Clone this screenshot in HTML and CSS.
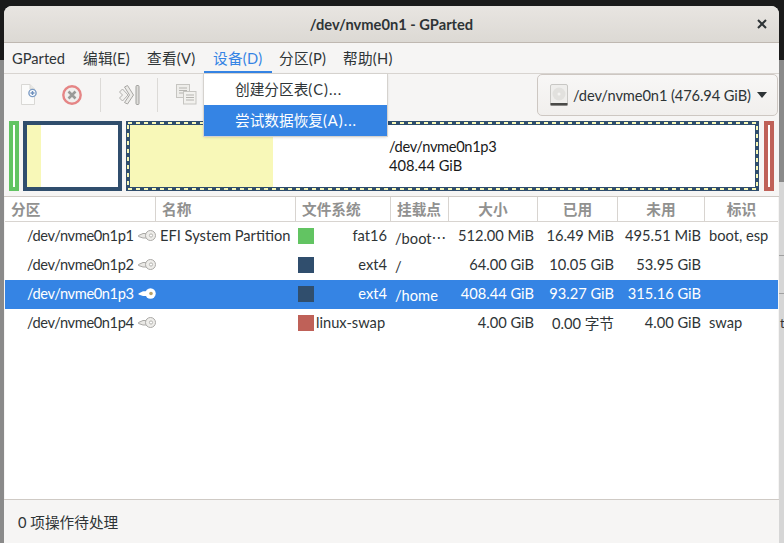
FILE: index.html
```html
<!DOCTYPE html>
<html lang="zh-CN">
<head>
<meta charset="utf-8">
<title>/dev/nvme0n1 - GParted</title>
<link rel="stylesheet" href="styles.css">
</head>
<body>
<div class="desk-left"></div>
<div class="desk-right"><span class="desk-line l1"></span><span class="desk-line l2"></span><span class="desk-text">te</span></div>
<main class="window">
  <header class="titlebar">
    <span class="title">/dev/nvme0n1 - GParted</span>
    <svg class="close" width="10" height="10" viewBox="0 0 10 10"><path d="M1 1L9 9M9 1L1 9" stroke="#2e3436" stroke-width="2" fill="none"/></svg>
  </header>
  <nav class="menubar">
    <span class="menu m1">GParted</span>
    <span class="menu m2">编辑(E)</span>
    <span class="menu m3">查看(V)</span>
    <span class="menu m4 active">设备(D)</span>
    <span class="menu m5">分区(P)</span>
    <span class="menu m6">帮助(H)</span>
  </nav>
  <div class="toolbar">
    <svg class="tool t-new" width="18" height="23" viewBox="0 0 18 23">
      <path d="M1.5 1.5H10L14.5 6V21.5H1.5Z" fill="#fbfbfa" stroke="#d9d8d5"/>
      <path d="M10 1.5V6H14.5" fill="#e8e7e4" stroke="#d9d8d5"/>
      <circle cx="12.5" cy="10" r="3.6" fill="#fff" stroke="#7d9cc4" stroke-width="1.4"/>
      <path d="M10.5 10H14.5M12.5 8V12" stroke="#6e90bd" stroke-width="1.4"/>
    </svg>
    <svg class="tool t-del" width="22" height="22" viewBox="0 0 22 22">
      <circle cx="11" cy="11" r="8.7" fill="#f1efed" stroke="#e58585" stroke-width="2.4"/>
      <path d="M7.5 7.5L14.5 14.5M14.5 7.5L7.5 14.5" stroke="#9a9a98" stroke-width="2.6"/>
    </svg>
    <span class="tsep s1"></span>
    <svg class="tool t-res" width="22" height="22" viewBox="0 0 22 22">
      <path d="M1.5 8L4.5 5L10 11L4.5 17L1.5 14L4.5 11Z" fill="#f2f1ef" stroke="#b0afac"/>
      <path d="M6.5 3L9.5 1.5L15.5 11L9.5 20L6.5 18.5L11.5 11Z" fill="#ecebe8" stroke="#a8a7a4"/>
      <rect x="18" y="1.5" width="3" height="19" rx="1" fill="#dddcd9" stroke="#a0a09d"/>
    </svg>
    <span class="tsep s2"></span>
    <svg class="tool t-copy" width="21" height="21" viewBox="0 0 21 21">
      <rect x="0.5" y="0.5" width="13" height="13" fill="#eeedea" stroke="#c6c5c1"/>
      <path d="M3 4H11M3 6.5H11M3 9H11" stroke="#b5b4b0"/>
      <rect x="7.5" y="7.5" width="12.5" height="12.5" fill="#f2f1ee" stroke="#c6c5c1"/>
      <path d="M10 11H18M10 13.5H18M10 16H18" stroke="#b5b4b0"/>
    </svg>
    <button class="combo" type="button">
      <svg class="disk-icon" width="18" height="22" viewBox="0 0 18 22">
        <rect x="0.5" y="0.5" width="17" height="21" rx="1.5" fill="#efeeec" stroke="#c8c7c4"/>
        <circle cx="9" cy="10" r="6.5" fill="#e2e1de"/>
        <circle cx="9" cy="10" r="1.5" fill="#f5f4f2"/>
        <rect x="0.5" y="19" width="17" height="2.5" fill="#4a4a48"/>
      </svg>
      <span class="combo-text">/dev/nvme0n1 (476.94 GiB)</span>
      <span class="caret"></span>
    </button>
  </div>
  <section class="disk">
    <div class="part fat"><span class="sliver"></span></div>
    <div class="part ext2"><span class="used u2"></span></div>
    <div class="part ext3">
      <span class="used u3"></span>
      <span class="part-label"><span class="tight">/dev/nvme0n1p3</span><br>408.44 GiB</span>
      <svg class="dashes" width="633" height="70"><rect x="2" y="2" width="629" height="66" fill="none" stroke="#f8f8b8" stroke-width="2" stroke-dasharray="4 4"/></svg>
    </div>
    <div class="part swap"><span class="sliver"></span></div>
  </section>
  <section class="table">
    <div class="row head">
      <span class="c1">分区</span><span class="c2">名称</span><span class="c3">文件系统</span><span class="c4">挂载点</span><span class="c5">大小</span><span class="c6">已用</span><span class="c7">未用</span><span class="c8">标识</span>
    </div>
    <div class="row body-row">
      <span class="c1"><span class="pname">/dev/nvme0n1p1</span><svg class="key" width="18" height="12" viewBox="0 0 18 12"><use href="#k"/></svg></span>
      <span class="c2">EFI System Partition</span>
      <span class="c3"><i class="swatch green"></i><b class="fs">fat16</b></span>
      <span class="c4 mount">/boot⋯</span><span class="c5 num">512.00 MiB</span><span class="c6 num">16.49 MiB</span><span class="c7 num">495.51 MiB</span><span class="c8">boot, esp</span>
    </div>
    <div class="row body-row">
      <span class="c1"><span class="pname">/dev/nvme0n1p2</span><svg class="key" width="18" height="12" viewBox="0 0 18 12"><use href="#k"/></svg></span>
      <span class="c2"></span>
      <span class="c3"><i class="swatch navy"></i><b class="fs">ext4</b></span>
      <span class="c4 mount">/</span><span class="c5 num">64.00 GiB</span><span class="c6 num">10.05 GiB</span><span class="c7 num">53.95 GiB</span><span class="c8"></span>
    </div>
    <div class="row body-row selected">
      <span class="c1"><span class="pname">/dev/nvme0n1p3</span><svg class="key" width="18" height="12" viewBox="0 0 18 12"><use href="#k2"/></svg></span>
      <span class="c2"></span>
      <span class="c3"><i class="swatch navy"></i><b class="fs">ext4</b></span>
      <span class="c4 mount">/home</span><span class="c5 num">408.44 GiB</span><span class="c6 num">93.27 GiB</span><span class="c7 num">315.16 GiB</span><span class="c8"></span>
    </div>
    <div class="row body-row">
      <span class="c1"><span class="pname">/dev/nvme0n1p4</span><svg class="key" width="18" height="12" viewBox="0 0 18 12"><use href="#k"/></svg></span>
      <span class="c2"></span>
      <span class="c3"><i class="swatch red"></i><b class="fs left">linux-swap</b></span>
      <span class="c4 mount"></span><span class="c5 num">4.00 GiB</span><span class="c6 num">0.00 字节</span><span class="c7 num">4.00 GiB</span><span class="c8">swap</span>
    </div>
  </section>
  <footer class="status">0 项操作待处理</footer>
  <div class="popup">
    <div class="item">创建分区表<span class="ell">(C)...</span></div>
    <div class="item hi">尝试数据恢复<span class="ell">(A)...</span></div>
  </div>
</main>
<svg class="defs" width="0" height="0">
  <defs>
    <g id="k">
      <path d="M0.5 5.5L5 3.5H10.5V8H5L0.5 6.5Z" fill="#e9e8e5" stroke="#aaa9a6"/>
      <circle cx="12.5" cy="5.5" r="5" fill="#eeedea" stroke="#aaa9a6"/>
      <circle cx="13" cy="5.5" r="1.6" fill="#fff" stroke="#b5b4b0"/>
    </g>
    <g id="k2">
      <path d="M0.5 5.5L5 3.2H10.5V8H5L0.5 6.5Z" fill="#fff"/>
      <circle cx="12.5" cy="5.5" r="5.2" fill="#fff"/>
      <circle cx="13" cy="5.5" r="1.8" fill="#b9a36a"/>
    </g>
  </defs>
</svg>
</body>
</html>
```
FILE: styles.css
```css
* { box-sizing: border-box; }
html, body { margin: 0; height: 100%; }
body {
  position: relative;
  overflow: hidden;
  width: 784px;
  height: 543px;
  background: #1a1a1a;
  font-family: Lato, "Noto Sans CJK SC", sans-serif;
  font-size: 14.67px;
  color: #2e3436;
}
.defs { position: absolute; }
.desk-left { position: absolute; left: 0; top: 60px; bottom: 0; width: 4px; background: #8a8a8a; }
.desk-right {
  position: absolute;
  right: 0;
  top: 60px;
  bottom: 0;
  width: 5px;
  overflow: hidden;
  background: linear-gradient(#8a8a8a 122px, #d6d6d6 122px);
}
.desk-line { position: absolute; left: 0; right: 0; height: 1px; background: #a0a0a0; }
.l1 { top: 195px; }
.l2 { top: 233px; }
.desk-text { position: absolute; left: 1px; top: 255px; font-size: 13px; color: #333; }
.window {
  position: absolute;
  left: 4px;
  top: 6px;
  width: 775px;
  height: 537px;
  background: #f6f5f4;
  border-radius: 8px 8px 0 0;
  display: flex;
  flex-direction: column;
  overflow: hidden;
}
.titlebar {
  position: relative;
  height: 37px;
  flex: none;
  display: flex;
  align-items: center;
  justify-content: center;
  background: linear-gradient(#e8e5e1, #dcd9d4);
  border-bottom: 1px solid #bfb8b1;
}
.title { font-weight: 700; color: #2e3436; }
.close { position: absolute; right: 12px; top: 13px; }
.menubar {
  position: relative;
  height: 31px;
  flex: none;
  border-bottom: 1px solid #d8d4d0;
  background: #f6f5f4;
}
.menu { position: absolute; top: 6px; line-height: 20px; letter-spacing: .25px; }
.m1 { left: 8px; letter-spacing: 0; }
.m2 { left: 79px; }
.m3 { left: 143px; }
.m4 { left: 209px; }
.m5 { left: 275px; }
.m6 { left: 339px; }
.active { color: #3584e4; }
.m4.active::after { content: ""; position: absolute; left: -9px; right: -9px; top: 22px; height: 3px; background: #3584e4; }
.toolbar {
  position: relative;
  height: 42px;
  flex: none;
  background: #f6f5f4;
}
.tool { position: absolute; }
.t-new { left: 16px; top: 9px; }
.t-del { left: 57px; top: 10px; }
.t-res { left: 114px; top: 10px; }
.t-copy { left: 172px; top: 10px; }
.tsep { position: absolute; top: 4px; width: 1px; height: 34px; background: #dcdad7; }
.s1 { left: 96px; }
.s2 { left: 153px; }
.combo {
  position: absolute;
  left: 533px;
  top: 0;
  width: 241px;
  height: 42px;
  padding: 0 10px 0 12px;
  display: flex;
  align-items: center;
  gap: 5px;
  border: 1px solid #cdc7c2;
  border-radius: 5px;
  background: linear-gradient(#f8f7f6, #f1efed);
  font: inherit;
  color: #2e3436;
  white-space: nowrap;
}
.disk-icon { flex: none; }
.combo-text { letter-spacing: -.1px; }
.caret { flex: none; width: 0; height: 0; border-left: 5.5px solid transparent; border-right: 5.5px solid transparent; border-top: 6px solid #2e3436; margin-left: auto; }
.disk {
  position: relative;
  height: 81px;
  flex: none;
  display: flex;
  padding: 5px 0 0 5px;
  gap: 4px;
  border-bottom: 1px solid #cfcac5;
  background: #f6f5f4;
}
.part { position: relative; height: 70px; background: #fff; }
.fat { width: 10px; border: 4px solid #62c462; }
.ext2 { width: 99px; border: 4px solid #304e6d; }
.ext3 { width: 633px; background: #fff; border: 4px solid #304e6d; }
.swap { width: 10px; margin-left: 1px; border: 4px solid #bf6158; }
.used { position: absolute; left: 0; top: 0; bottom: 0; background: #f8f8b8; }
.u2 { width: 14px; }
.u3 { width: 143px; }
.part-label { position: absolute; left: 259px; top: 12px; line-height: 19px; color: #1a1a1a; white-space: nowrap; }
.tight { letter-spacing: -.35px; }
.dashes { position: absolute; left: -4px; top: -4px; }
.table { flex: 1; background: #fff; margin: 0 1px; min-height: 0; }
.row {
  display: grid;
  grid-template-columns: 151px 140px 95px 58px 89px 80px 87px 73px;
  height: 29px;
  align-items: center;
  white-space: nowrap;
}
.row > span { display: flex; align-items: center; height: 100%; overflow: hidden; }
.head {
  height: 25px;
  font-weight: 700;
  color: #919190;
  border-bottom: 1px solid #d8d4d0;
}
.head > span { padding-left: 6px; padding-bottom: 2px; border-right: 1px solid #d8d4d0; }
.head > .c5, .head > .c6, .head > .c7, .head > .c8 { justify-content: center; padding-left: 0; }
.head > .c8 { border-right: 0; }
.body-row > span { padding-bottom: 2px; }
.body-row > .c1 { padding-left: 22px; }
.pname { flex: 0 0 111px; letter-spacing: -.4px; }
.key { flex: none; }
.body-row > .c2 { padding-left: 4px; }
.body-row > .c3 { padding-left: 2px; padding-right: 4px; }
.swatch { display: block; flex: none; width: 16px; height: 16px; align-self: flex-start; margin-top: 6px; }
.green { background: #62c462; }
.navy { background: #304e6d; }
.red { background: #bf6158; }
.fs { font-weight: 400; flex: 1; text-align: right; }
.fs.left { text-align: left; padding-left: 2px; }
.body-row > .mount { padding-left: 4px; padding-top: 2px; padding-bottom: 0; }
.body-row > .num { justify-content: flex-end; padding-right: 4px; }
.body-row > .c8 { padding-left: 4px; }
.selected { background: #3584e4; color: #fff; }
.status {
  flex: none;
  height: 44px;
  border-top: 1px solid #cfcac5;
  padding-left: 14px;
  display: flex;
  align-items: center;
  background: #f6f5f4;
}
.popup {
  position: absolute;
  left: 200px;
  top: 68px;
  width: 183px;
  height: 62px;
  background: #fff;
  box-shadow: 0 0 0 1px #d5d2ce, 0 1px 3px rgba(0,0,0,.2);
}
.item { height: 31px; padding-left: 31px; line-height: 31px; }
.ell { letter-spacing: 1px; }
.hi { background: #3584e4; color: #fff; }
```
